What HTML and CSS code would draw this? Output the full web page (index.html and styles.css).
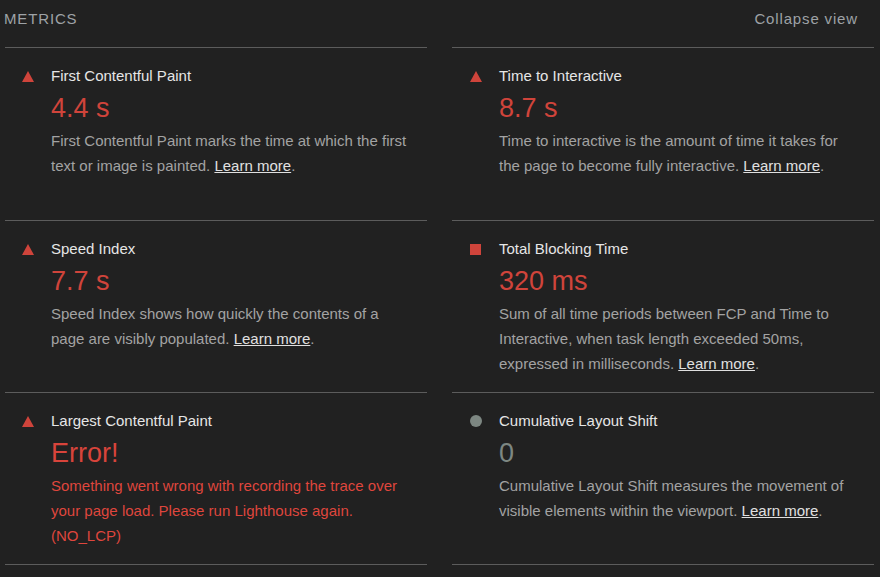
FILE: index.html
```html
<!DOCTYPE html>
<html lang="en">
<head>
<meta charset="utf-8">
<title>Metrics</title>
<link rel="stylesheet" href="styles.css">
</head>
<body>
<div class="metrics">
  <div class="header">
    <span class="header-title">METRICS</span>
    <span class="header-toggle">Collapse view</span>
  </div>
  <div class="grid">
    <div class="metric">
      <span class="icon icon-fail"></span>
      <div class="title">First Contentful Paint</div>
      <div class="value value-fail">4.4&nbsp;s</div>
      <div class="desc">First Contentful Paint marks the time at which the first text or image is painted. <a href="#" class="link">Learn more</a>.</div>
    </div>
    <div class="metric">
      <span class="icon icon-fail"></span>
      <div class="title">Time to Interactive</div>
      <div class="value value-fail">8.7&nbsp;s</div>
      <div class="desc">Time to interactive is the amount of time it takes for the page to become fully interactive. <a href="#" class="link">Learn more</a>.</div>
    </div>
    <div class="metric">
      <span class="icon icon-fail"></span>
      <div class="title">Speed Index</div>
      <div class="value value-fail">7.7&nbsp;s</div>
      <div class="desc">Speed Index shows how quickly the contents of a page are visibly populated. <a href="#" class="link">Learn more</a>.</div>
    </div>
    <div class="metric">
      <span class="icon icon-average"></span>
      <div class="title">Total Blocking Time</div>
      <div class="value value-fail">320&nbsp;ms</div>
      <div class="desc">Sum of all time periods between FCP and Time to Interactive, when task length exceeded 50ms, expressed in milliseconds. <a href="#" class="link">Learn more</a>.</div>
    </div>
    <div class="metric metric-last">
      <span class="icon icon-fail"></span>
      <div class="title">Largest Contentful Paint</div>
      <div class="value value-error">Error!</div>
      <div class="desc desc-error">Something went wrong with recording the trace over your page load. Please run Lighthouse again. (NO_LCP)</div>
    </div>
    <div class="metric metric-last">
      <span class="icon icon-neutral"></span>
      <div class="title">Cumulative Layout Shift</div>
      <div class="value value-neutral">0</div>
      <div class="desc">Cumulative Layout Shift measures the movement of visible elements within the viewport. <a href="#" class="link">Learn more</a>.</div>
    </div>
  </div>
</div>
</body>
</html>
```

FILE: styles.css
```css
html, body {
  margin: 0;
  padding: 0;
  background: #212121;
}

body {
  font-family: "Liberation Sans", Arial, sans-serif;
  color: #e4e4e4;
}

.metrics {
  padding: 0 6px 0 5px;
}

.header {
  display: flex;
  justify-content: space-between;
  align-items: center;
  height: 20px;
  padding: 9px 16px 18px 0;
  font-size: 15px;
  line-height: 20px;
  letter-spacing: 0.85px;
  color: #9ea2a6;
}

.header-title {
  margin-left: -1px;
}

.grid {
  display: grid;
  grid-template-columns: 1fr 1fr;
  grid-template-rows: 173px 172px 173px;
  column-gap: 25px;
}

.metric {
  box-sizing: border-box;
  display: grid;
  grid-template-columns: 47px 1fr;
  grid-template-rows: 20px auto auto;
  align-content: start;
  border-top: 1px solid #5c5c5c;
  padding: 18px 14px 0 0;
}

.metric:nth-child(odd) {
  grid-template-columns: 46px 1fr;
}

.metric-last {
  border-bottom: 1px solid #5c5c5c;
}

.icon {
  grid-column: 1;
  grid-row: 1;
  justify-self: center;
  align-self: center;
}

.icon-fail {
  width: 0;
  height: 0;
  border-left: 6.5px solid transparent;
  border-right: 6.5px solid transparent;
  border-bottom: 11px solid #cf443b;
}

.icon-average {
  width: 11px;
  height: 11px;
  background: #cf443b;
}

.icon-neutral {
  width: 12px;
  height: 12px;
  border-radius: 50%;
  background: #7d8782;
}

.title {
  grid-column: 2;
  grid-row: 1;
  font-size: 15px;
  line-height: 20px;
  color: #e6e6e6;
}

.value {
  grid-column: 2;
  grid-row: 2;
  margin-top: 4px;
  font-size: 27px;
  line-height: 36px;
}

.value-fail {
  color: #d0443b;
}

.value-error {
  color: #d8443b;
}

.value-neutral {
  color: #7d8782;
}

.desc {
  grid-column: 2;
  grid-row: 3;
  margin-top: 2px;
  font-size: 15px;
  line-height: 25px;
  color: #a3a3a3;
}

.desc-error {
  color: #df463d;
}

.link {
  color: #e0e0e0;
  text-decoration: underline;
}
```
